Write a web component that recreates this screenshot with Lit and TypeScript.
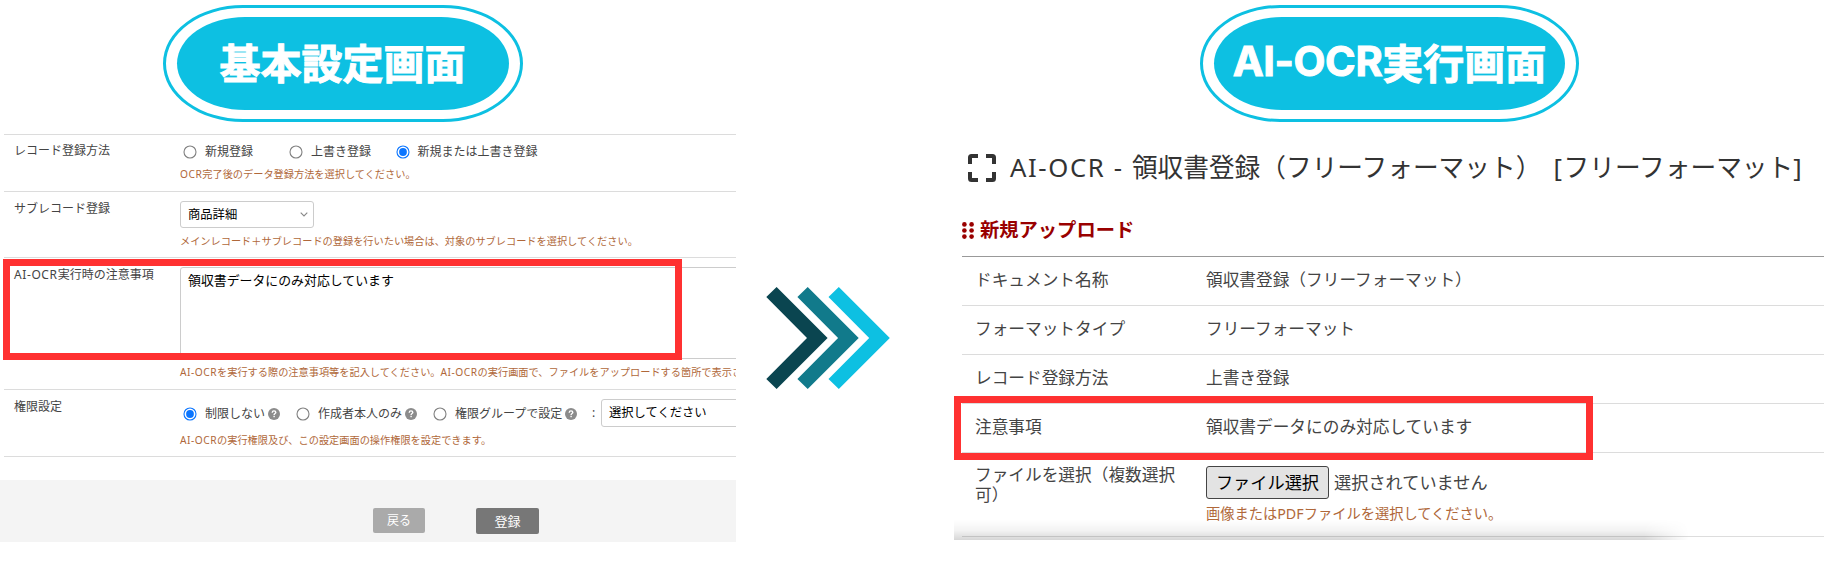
import { LitElement, html, svg, css, nothing } from "lit";
import { customElement, property } from "lit/decorators.js";

@customElement("title-pill")
class TitlePill extends LitElement {
  static styles = css`
    :host { display: block; }
    .ring {
      box-sizing: border-box;
      width: 100%;
      height: 117px;
      padding: 9px 11px;
      border: 3px solid #0dc0e2;
      border-radius: 80px / 58.5px;
      background: #fff;
    }
    .fill {
      box-sizing: border-box;
      height: 93px;
      padding-bottom: 5px;
      border-radius: 68px / 46.5px;
      background: #0dc0e2;
      color: #fff;
      display: flex;
      align-items: center;
      justify-content: center;
      font: 700 41px/60px "Noto Sans CJK JP", sans-serif;
      white-space: nowrap;
      -webkit-text-stroke: 1px #fff;
      paint-order: stroke;
      stroke-linejoin: round;
    }
  `;
  render() {
    return html`<div class="ring"><div class="fill"><slot></slot></div></div>`;
  }
}

@customElement("radio-option")
class RadioOption extends LitElement {
  @property({ type: Boolean }) checked = false;
  @property({ type: Boolean }) help = false;
  static styles = css`
    :host { display: flex; align-items: center; height: 16px; white-space: nowrap; }
    .dot { width: 14px; height: 14px; margin-right: 8px; flex: none; }
    .q { width: 12px; height: 12px; margin-left: 3px; flex: none; }
  `;
  render() {
    return html`
      <svg class="dot" viewBox="0 0 14 14">
        <circle cx="7" cy="7" r="6" fill="#fff" stroke=${this.checked ? "#0a75ff" : "#808080"} stroke-width="1.1"></circle>
        ${this.checked ? svg`<circle cx="7" cy="7" r="3.9" fill="#0a75ff"></circle>` : nothing}
      </svg>
      <slot></slot>
      ${this.help
        ? html`<svg class="q" viewBox="0 0 12 12">
            <circle cx="6" cy="6" r="6" fill="#8c8c8c"></circle>
            <path d="M4.2 4.7C4.3 3.4 5 2.9 6 2.9C7.1 2.9 7.8 3.5 7.8 4.4C7.8 5.5 6.1 5.6 6.1 6.9" fill="none" stroke="#fff" stroke-width="1.4"></path>
            <rect x="5.4" y="7.8" width="1.4" height="1.4" fill="#fff"></rect>
          </svg>`
        : nothing}
    `;
  }
}

@customElement("settings-panel")
class SettingsPanel extends LitElement {
  static styles = css`
    :host { display: block; position: relative; width: 736px; height: 566px; overflow: hidden; }
    .head { height: 129px; padding: 5px 0 0 162.5px; }
    .head title-pill { width: 360px; }
    .row {
      box-sizing: border-box;
      display: flex;
      margin-left: 4px;
      border-top: 1px solid #dcdcdc;
      white-space: nowrap;
    }
    .r1 { height: 57px; }
    .r2 { height: 66px; }
    .r3 { height: 132px; }
    .r4 { height: 68px; border-bottom: 1px solid #dcdcdc; }
    .label { flex: none; width: 166px; padding: 9px 0 0 10px; }
    .r1 .label { padding-top: 8px; }
    .field { flex: none; width: 700px; padding-top: 9px; }
    .options { display: flex; align-items: center; padding-left: 3px; }
    .r1 .options { height: 16px; }
    .r1 .options radio-option:nth-child(1) { width: 106px; }
    .r1 .options radio-option:nth-child(2) { width: 106.5px; }
    .r4 .options { height: 28px; }
    .r4 .options radio-option { padding-top: 1px; }
    .r4 .options radio-option:nth-child(1) { width: 113px; }
    .r4 .options radio-option:nth-child(2) { width: 137px; }
    .r4 .options radio-option:nth-child(3) { width: 159px; }
    .colon { width: 9px; }
    .help { font-size: 10.2px; line-height: 14px; color: #b0683a; margin-top: 6px; }
    .r1 .help { margin-top: 7px; }
    .lat { letter-spacing: 0.05em; }
    .select {
      box-sizing: border-box;
      display: flex;
      align-items: center;
      justify-content: space-between;
      width: 134px;
      height: 27px;
      padding: 0 5px 0 7px;
      border: 1px solid #ccc;
      border-radius: 3px;
      background: #fff;
      color: #000;
      font-size: 12.3px;
    }
    .select.wide { width: 200px; height: 28px; }
    .select svg { width: 8px; height: 5px; }
    .area {
      box-sizing: border-box;
      width: 620px;
      height: 92px;
      border: 1px solid #ccc;
      border-radius: 3px;
      padding: 4px 7px;
      color: #000;
      font-size: 12.9px;
    }
    .mark {
      position: absolute;
      left: 3px;
      top: 259px;
      width: 665px;
      height: 87px;
      border: 7px solid #ff3131;
    }
    .foot {
      box-sizing: border-box;
      display: flex;
      gap: 51px;
      height: 62px;
      margin-top: 23px;
      padding: 28px 0 0 373px;
      background: #f4f4f4;
      color: #fff;
    }
    .btn { display: flex; align-items: center; justify-content: center; border-radius: 2px; }
    .back { width: 52px; height: 25px; background: #aaa; }
    .save { width: 63px; height: 26px; background: #777; font-size: 13px; }
  `;
  render() {
    return html`
      <div class="head"><title-pill>基本設定画面</title-pill></div>
      <div class="row r1">
        <div class="label">レコード登録方法</div>
        <div class="field">
          <div class="options">
            <radio-option>新規登録</radio-option>
            <radio-option>上書き登録</radio-option>
            <radio-option checked>新規または上書き登録</radio-option>
          </div>
          <div class="help"><span class="lat">OCR</span>完了後のデータ登録方法を選択してください。</div>
        </div>
      </div>
      <div class="row r2">
        <div class="label">サブレコード登録</div>
        <div class="field">
          <div class="select">
            商品詳細
            <svg viewBox="0 0 8 5"><path d="M0.7 0.7L4 4L7.3 0.7" fill="none" stroke="#888" stroke-width="1.1"></path></svg>
          </div>
          <div class="help">メインレコード＋サブレコードの登録を行いたい場合は、対象のサブレコードを選択してください。</div>
        </div>
      </div>
      <div class="row r3">
        <div class="label"><span class="lat">AI-OCR</span>実行時の注意事項</div>
        <div class="field">
          <div class="area">領収書データにのみ対応しています</div>
          <div class="help"><span class="lat">AI-OCR</span>を実行する際の注意事項等を記入してください。<span class="lat">AI-OCR</span>の実行画面で、ファイルをアップロードする箇所で表示さ</div>
        </div>
      </div>
      <div class="row r4">
        <div class="label">権限設定</div>
        <div class="field">
          <div class="options">
            <radio-option checked help>制限しない</radio-option>
            <radio-option help>作成者本人のみ</radio-option>
            <radio-option help>権限グループで設定</radio-option>
            <span class="colon">:</span>
            <div class="select wide">選択してください</div>
          </div>
          <div class="help"><span class="lat">AI-OCR</span>の実行権限及び、この設定画面の操作権限を設定できます。</div>
        </div>
      </div>
      <div class="foot">
        <div class="btn back">戻る</div>
        <div class="btn save">登録</div>
      </div>
      <div class="mark"></div>
    `;
  }
}

@customElement("run-panel")
class RunPanel extends LitElement {
  static styles = css`
    :host {
      display: block;
      position: relative;
      width: 870px;
      height: 566px;
      overflow: hidden;
      font-size: 16.68px;
      line-height: 20px;
      white-space: nowrap;
    }
    .head { height: 141px; padding: 5px 0 0 246px; }
    .head title-pill { width: 379px; }
    .pl { font-family: Inter, sans-serif; font-size: 41.5px; letter-spacing: -0.01em; }
    .title { display: flex; align-items: center; height: 44px; padding-left: 14px; font-size: 25.7px; line-height: 44px; color: #333; }
    .title svg { width: 28px; height: 28px; margin-right: 14px; }
    .lat { letter-spacing: 0.063em; }
    .gap { margin-left: 4px; letter-spacing: 0.06em; }
    .section { display: flex; align-items: center; height: 24px; margin-top: 28px; padding-left: 8px; font-size: 19.3px; font-weight: 700; color: #900; }
    .section svg { width: 12px; height: 17px; margin-right: 6px; }
    .table { margin: 14px 0 0 8px; border-top: 1px solid #999; }
    .row { box-sizing: border-box; display: flex; height: 49px; padding-top: 13px; border-bottom: 1px solid #dcdcdc; }
    .row.last { height: 84px; border-bottom: 1px solid #ddd; padding-top: 12px; }
    .label { width: 231px; padding-left: 13px; flex: none; }
    .file { display: flex; align-items: center; gap: 5px; font-size: 17.2px; margin-top: -3px; }
    .pick {
      box-sizing: border-box;
      display: flex;
      align-items: center;
      justify-content: center;
      width: 123px;
      height: 33px;
      border: 1px solid #444;
      border-radius: 3px;
      background: #e3e3e3;
      color: #000;
    }
    .help { font-size: 14.25px; line-height: 16px; margin-top: 7px; color: #b0683a; }
    .last { align-items: flex-start; }
    .last .value { padding-top: 4px; }
    .mark {
      position: absolute;
      left: 0;
      top: 396px;
      width: 625px;
      height: 50px;
      border: 7px solid #ff3131;
    }
    .shade {
      position: absolute;
      left: 0;
      top: 520px;
      width: 735px;
      height: 20px;
      background: linear-gradient(to bottom, rgba(0, 0, 0, 0), rgba(0, 0, 0, 0.05) 55%, rgba(0, 0, 0, 0.16));
      -webkit-mask-image: linear-gradient(to right, #000 690px, transparent 735px);
      mask-image: linear-gradient(to right, #000 690px, transparent 735px);
    }
  `;
  row(label: string, value: string) {
    return html`<div class="row"><div class="label">${label}</div><div>${value}</div></div>`;
  }
  render() {
    return html`
      <div class="head"><title-pill><span class="pl">AI-OCR</span>実行画面</title-pill></div>
      <div class="title">
        <svg viewBox="0 0 28 28" fill="none" stroke="#333" stroke-width="4">
          <path d="M2 10V3.5Q2 2 3.5 2H10M18 2H24.5Q26 2 26 3.5V10M26 18V24.5Q26 26 24.5 26H18M10 26H3.5Q2 26 2 24.5V18"></path>
        </svg>
        <span><span class="lat">AI-OCR - </span>領収書登録（フリーフォーマット）<span class="gap"> [</span>フリーフォーマット]</span>
      </div>
      <div class="section">
        <svg viewBox="0 0 12 17" fill="#900">
          ${[2.4, 8.5, 14.6].map((y) => svg`<circle cx="2.4" cy=${y} r="2.3"></circle><circle cx="9.6" cy=${y} r="2.3"></circle>`)}
        </svg>
        新規アップロード
      </div>
      <div class="table">
        ${this.row("ドキュメント名称", "領収書登録（フリーフォーマット）")}
        ${this.row("フォーマットタイプ", "フリーフォーマット")}
        ${this.row("レコード登録方法", "上書き登録")}
        ${this.row("注意事項", "領収書データにのみ対応しています")}
        <div class="row last">
          <div class="label">ファイルを選択（複数選択<br />可）</div>
          <div class="value">
            <div class="file"><div class="pick">ファイル選択</div>選択されていません</div>
            <div class="help">画像またはPDFファイルを選択してください。</div>
          </div>
        </div>
      </div>
      <div class="shade"></div>
      <div class="mark"></div>
    `;
  }
}

@customElement("app-root")
class AppRoot extends LitElement {
  static styles = css`
    :host {
      display: grid;
      grid-template-columns: 736px 218px 870px;
      width: 1824px;
      height: 566px;
      overflow: hidden;
      background: #fff;
      color: #444;
      font-family: "Noto Sans", "Noto Sans CJK JP", sans-serif;
      font-size: 12px;
      line-height: 16px;
    }
    .arrows { padding: 287px 0 0 30px; }
    .arrows svg { display: block; width: 124px; height: 102px; }
  `;
  render() {
    const colors = ["#0a4550", "#117a8b", "#0dc0e2"];
    return html`
      <settings-panel></settings-panel>
      <div class="arrows">
        <svg viewBox="0 0 124 102">
          ${colors.map(
            (c, i) => svg`<path fill=${c} transform="translate(${i * 31.1} 0)" d="M10.6 0L61.6 51L10.6 102L0.3 92L41 51L0.3 10Z"></path>`
          )}
        </svg>
      </div>
      <run-panel></run-panel>
    `;
  }
}
